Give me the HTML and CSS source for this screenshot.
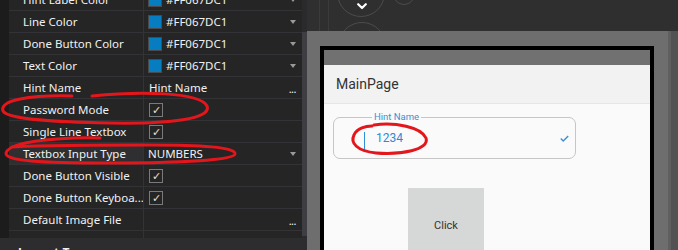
FILE: index.html
```html
<!DOCTYPE html>
<html>
<head>
<meta charset="utf-8">
<link rel="stylesheet" href="styles.css">
</head>
<body>
<div class="props">
  <div class="props-body">
    <div class="gutter"></div>
    <div class="grid">
      <div class="row"><div class="name">Hint Label Color</div><div class="value"><span class="swatch"></span><span class="val-text">#FF067DC1</span><span class="arrow"></span></div></div>
      <div class="row"><div class="name">Line Color</div><div class="value"><span class="swatch"></span><span class="val-text">#FF067DC1</span><span class="arrow"></span></div></div>
      <div class="row"><div class="name">Done Button Color</div><div class="value"><span class="swatch"></span><span class="val-text">#FF067DC1</span><span class="arrow"></span></div></div>
      <div class="row"><div class="name">Text Color</div><div class="value"><span class="swatch"></span><span class="val-text">#FF067DC1</span><span class="arrow"></span></div></div>
      <div class="row"><div class="name">Hint Name</div><div class="value"><span class="val-text plain">Hint Name</span><span class="dots">...</span></div></div>
      <div class="row"><div class="name">Password Mode</div><div class="value"><span class="check">&#10003;</span></div></div>
      <div class="row"><div class="name">Single Line Textbox</div><div class="value"><span class="check">&#10003;</span></div></div>
      <div class="row row-sel"><div class="name">Textbox Input Type</div><div class="value"><span class="val-text">NUMBERS</span><span class="arrow"></span></div></div>
      <div class="row"><div class="name">Done Button Visible</div><div class="value"><span class="check">&#10003;</span></div></div>
      <div class="row"><div class="name">Done Button Keyboa...</div><div class="value"><span class="check">&#10003;</span></div></div>
      <div class="row"><div class="name">Default Image File</div><div class="value"><span class="val-text"></span><span class="dots">...</span></div></div>
      <div class="row"><div class="name">Pressed Image File</div><div class="value"><span class="val-text">'</span></div></div>
    </div>
    <div class="scroll"><div class="thumb"></div></div>
  </div>
  <div class="props-foot">Layout Type</div>
</div>

<div class="stage">
  <div class="toolbar">
    <span class="knob knob-big"><svg class="chev" width="10" height="7" viewBox="0 0 10 7"><path d="M1.2 1.2 L5 5 L8.8 1.2" fill="none" stroke="#ffffff" stroke-width="2.2" stroke-linecap="round" stroke-linejoin="round"/></svg></span>
    <span class="knob knob-small"></span>
    <span class="knob knob-low"></span>
  </div>
  <div class="stage-body">
    <div class="frame">
      <div class="device">
        <div class="statusbar"></div>
        <div class="appbar">MainPage</div>
        <div class="content">
          <div class="entry">
            <span class="entry-label">Hint Name</span>
            <span class="caret"></span>
            <span class="entry-text">1234</span>
            <svg class="entry-check" width="9" height="7" viewBox="0 0 9 7"><path d="M0.8 3.6 L3.2 5.9 L8.2 0.9" fill="none" stroke="#3a8fd6" stroke-width="1.4"/></svg>
          </div>
          <div class="btn">Click</div>
        </div>
      </div>
    </div>
    <div class="edge"></div>
  </div>
</div>

<svg class="ink" width="678" height="250" viewBox="0 0 678 250">
  <path d="M92 96 C140 91 200 92 207 106 C212 119 170 124 110 123 C60 122 8 120 3 111 C-1 100 30 95 72 96" fill="none" stroke="#e3161c" stroke-width="3" stroke-linecap="round"/>
  <path d="M100 138 C85 137 70 138 57 139 C30 141 8 145 6 153 C5 161 40 163 110 163 C180 163 234 160 235 154 C236 147 200 145 150 145 C100 145 40 145 12 147" fill="none" stroke="#e3161c" stroke-width="3" stroke-linecap="round"/>
  <path d="M374 125 C395 122 421 127 426 138 C430 150 400 155 376 153 C357 151 350 143 354 135 C357 128 366 126 372 126" fill="none" stroke="#e3161c" stroke-width="3" stroke-linecap="round"/>
</svg>
</body>
</html>
```

FILE: styles.css
```css
* { box-sizing: border-box; }
html, body { margin: 0; padding: 0; }
body {
  width: 678px;
  height: 250px;
  overflow: hidden;
  background: #2d2d30;
  font-family: "Noto Sans", "Open Sans", sans-serif;
  position: relative;
  display: flex;
}

/* property grid */
.props {
  width: 307px;
  height: 250px;
  display: flex;
  flex-direction: column;
  background: #252526;
}
.props-body {
  display: flex;
  height: 238px;
  overflow: hidden;
}
.gutter { width: 9px; background: #1c1c1d; flex-shrink: 0; }
.grid {
  width: 293px;
  margin-top: -11px;
  display: flex;
  flex-direction: column;
}
.row {
  display: flex;
  height: 22px;
  flex-shrink: 0;
  border-bottom: 1px solid #333337;
}
.row-sel .name { background: #2f2f32; }
.name {
  width: 135px;
  flex-shrink: 0;
  border-right: 1px solid #333337;
  padding-left: 14px;
  color: #f1f1f1;
  font-size: 11.5px;
  line-height: 21px;
  white-space: nowrap;
  overflow: hidden;
}
.value {
  flex: 1;
  display: flex;
  align-items: center;
  padding-left: 4px;
  padding-right: 6px;
  color: #f1f1f1;
  font-size: 11.5px;
  white-space: nowrap;
}
.swatch {
  width: 14px;
  height: 14px;
  background: #067dc1;
  border: 1px solid #4a4a4a;
  margin-right: 4px;
  flex-shrink: 0;
}
.val-text { flex: 1; }
.plain { padding-left: 1px; }
.arrow {
  width: 0;
  height: 0;
  border-left: 3.5px solid transparent;
  border-right: 3.5px solid transparent;
  border-top: 4px solid #9a9a9a;
}
.dots { font-size: 11px; letter-spacing: -0.5px; color: #f1f1f1; margin-top: 2px; }
.check {
  width: 14px;
  height: 14px;
  margin-left: 1px;
  border: 1px solid #7a7a7a;
  display: flex;
  align-items: center;
  justify-content: center;
  font-size: 11px;
  line-height: 1;
  color: #e0e0e0;
}
.scroll {
  width: 5px;
  background: #2a2a2c;
  padding-top: 32px;
  flex-shrink: 0;
}
.thumb { height: 204px; background: #3e3e42; }
.props-foot {
  height: 12px;
  background: #2d2d30;
  color: #f1f1f1;
  font-weight: bold;
  font-size: 12px;
  line-height: 12px;
  padding: 9px 0 0 18px;
  overflow: hidden;
}

/* designer stage */
.stage {
  flex: 1;
  display: flex;
  flex-direction: column;
  background: #2f2f2f;
}
.toolbar {
  height: 31px;
  flex-shrink: 0;
  position: relative;
  overflow: hidden;
  background:
    linear-gradient(to right, transparent 12px, #3b3b3b 12px, #3b3b3b 13px, transparent 13px, transparent 21px, #3b3b3b 21px, #3b3b3b 22px, transparent 22px);
}
.knob {
  position: absolute;
  border: 1px solid #4c4c4c;
  border-radius: 50%;
  background: #2f2f2f;
}
.knob-big { left: 30px; top: -31px; width: 48px; height: 48px; }
.chev { position: absolute; left: 19px; top: 33px; }
.knob-small { left: 86px; top: -17px; width: 22px; height: 22px; }
.knob-low { left: 31px; top: 22px; width: 48px; height: 48px; }
.stage-body { flex: 1; display: flex; overflow: hidden; }
.frame {
  width: 361px;
  background: #6e6e6e;
  padding: 15px 0 0 13px;
}
.edge {
  flex: 1;
  background: #525252;
  border-left: 3px solid #5f5f5f;
}
.device {
  width: 334px;
  height: 204px;
  border: 4px solid #000;
  border-bottom: none;
  display: flex;
  flex-direction: column;
  background: #fafafa;
  overflow: hidden;
}
.statusbar { height: 15px; background: #717171; flex-shrink: 0; }
.appbar {
  height: 39px;
  flex-shrink: 0;
  background: #f2f2f2;
  border-bottom: 1px solid #e6e6e6;
  font-family: Roboto, "Noto Sans", sans-serif;
  font-size: 14px;
  color: #333333;
  padding-left: 12px;
  line-height: 38px;
}
.content {
  flex: 1;
  display: flex;
  flex-direction: column;
  font-family: Roboto, "Noto Sans", sans-serif;
}
.entry {
  position: relative;
  flex-shrink: 0;
  margin: 13px 0 0 9px;
  width: 243px;
  height: 42px;
  border: 1px solid #c6c6c6;
  border-radius: 7px;
  display: flex;
  align-items: center;
  padding: 6px 0 0 30px;
}
.entry-label {
  position: absolute;
  left: 38px;
  top: -7px;
  padding: 0 2px;
  background: #fafafa;
  font-size: 9.5px;
  line-height: 12px;
  color: #3a8fd6;
}
.caret {
  width: 1px;
  height: 19px;
  background: #2f8fd8;
  margin-right: 11px;
}
.entry-text {
  flex: 1;
  font-size: 12px;
  color: #2f8ad3;
  margin-top: -6px;
}
.entry-check { margin-right: 6px; margin-top: -6px; }
.btn {
  flex-shrink: 0;
  margin: 29px 0 0 84px;
  width: 76px;
  height: 74px;
  background: #d6d7d7;
  display: flex;
  align-items: center;
  justify-content: center;
  font-size: 11px;
  color: #333333;
}

/* hand-drawn annotations */
.ink {
  position: absolute;
  left: 0;
  top: 0;
  pointer-events: none;
}
```
